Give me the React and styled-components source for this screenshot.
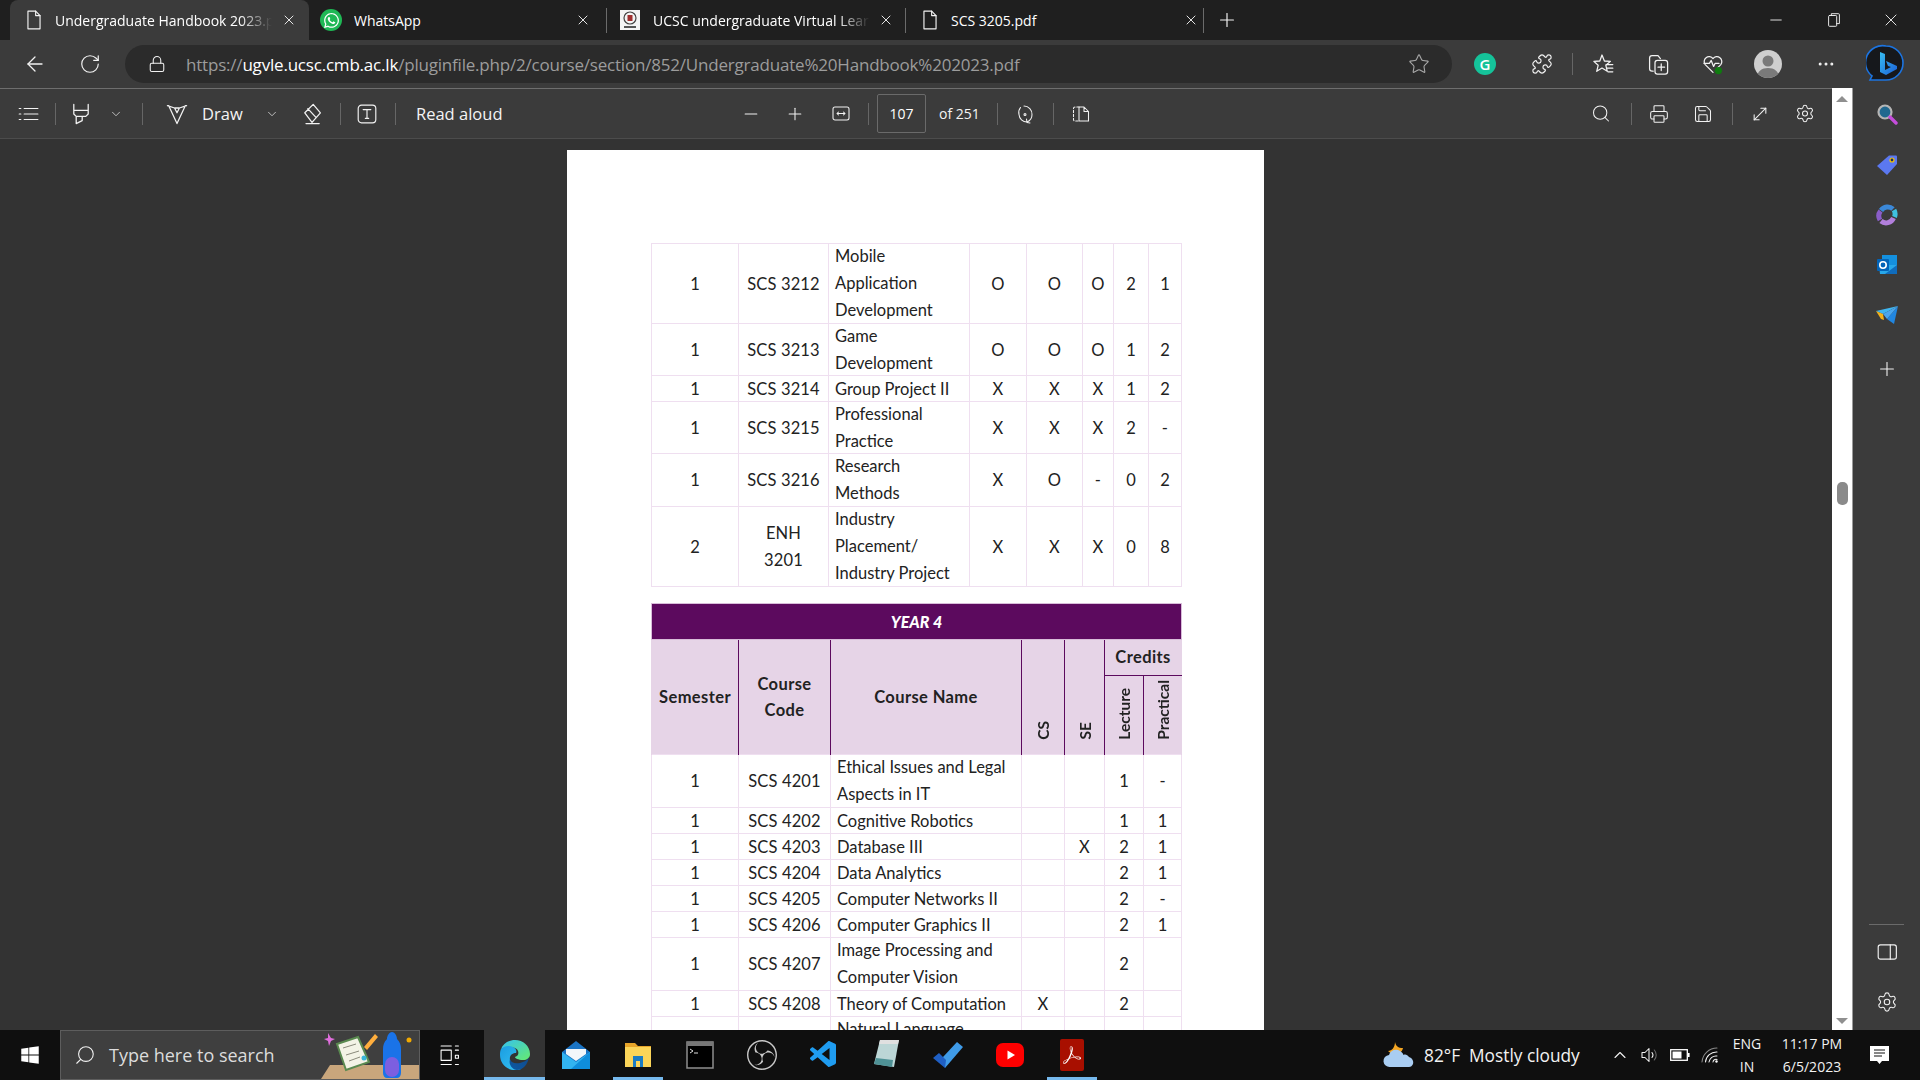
import styled, { createGlobalStyle } from "styled-components";
import {
  ArrowLeft,
  ChevronDown,
  ChevronUp,
  Minus,
  Plus,
  RotateCw,
  Search,
  Star,
  X,
  Lock,
  MoreHorizontal,
  Settings,
  Printer,
  Save,
  MoveDiagonal,
  Puzzle,
} from "lucide-react";
import { FaWhatsapp, FaWindows } from "react-icons/fa";
import { SiObsstudio, SiAdobeacrobatreader } from "react-icons/si";
import { VscVscode } from "react-icons/vsc";

const GlobalStyle = createGlobalStyle`
  html, body {
    margin: 0;
    padding: 0;
    background: #333;
    overflow: hidden;
  }
`;

const Screen = styled.div`
  width: 1920px;
  height: 1080px;
  display: flex;
  flex-direction: column;
  overflow: hidden;
  font-family: "Open Sans", "Liberation Sans", sans-serif;
  color: #fff;
`;

// shared slot, centres a glyph in a fixed width
const Slot = styled.div`
  flex: none;
  width: ${(p) => p.$w || 20}px;
  margin-left: ${(p) => p.$ml || 0}px;
  display: flex;
  align-items: center;
  justify-content: center;
  color: ${(p) => p.$color || "#f2f2f2"};
`;

/* tab strip */
const TabStrip = styled.div`
  height: 40px;
  flex: none;
  background: #1f1f1f;
  display: flex;
  align-items: stretch;
`;
const Tab = styled.div`
  flex: none;
  width: ${(p) => p.$w}px;
  margin-left: ${(p) => p.$ml || 0}px;
  position: relative;
  display: flex;
  align-items: center;
  background: ${(p) => (p.$active ? "#3b3b3b" : "transparent")};
  border-radius: ${(p) => (p.$active ? "8px 8px 0 0" : "0")};
  &::after {
    content: "";
    display: ${(p) => (p.$divider ? "block" : "none")};
    position: absolute;
    right: 0;
    top: 8px;
    width: 1px;
    height: 25px;
    background: #6b6b6b;
  }
`;
const TabTitle = styled.div`
  flex: none;
  width: ${(p) => p.$w}px;
  margin-left: ${(p) => p.$ml}px;
  font-size: 14px;
  white-space: nowrap;
  overflow: hidden;
  color: #fff;
  ${(p) =>
    p.$fade
      ? "-webkit-mask-image: linear-gradient(to right, #000 85%, transparent 100%);"
      : ""}
`;
const Favicon = styled.div`
  width: 20px;
  height: 20px;
  margin-left: ${(p) => p.$ml}px;
  flex: none;
  background: #f4f4f4;
  display: flex;
  align-items: center;
  justify-content: center;
`;
const WaBadge = styled.div`
  width: 22px;
  height: 22px;
  border-radius: 50%;
  background: #1fb855;
  color: #fff;
  display: flex;
  align-items: center;
  justify-content: center;
`;
const WindowButtons = styled.div`
  margin-left: auto;
  display: flex;
  align-items: center;
`;

/* address row */
const AddressRow = styled.div`
  height: 48px;
  flex: none;
  background: #3b3b3b;
  display: flex;
  align-items: center;
`;
const Pill = styled.div`
  flex: none;
  width: 1327px;
  height: 38px;
  margin-left: 21px;
  border-radius: 19px;
  background: #2b2b2b;
  display: flex;
  align-items: center;
`;
const Url = styled.div`
  flex: none;
  width: 1215px;
  margin-left: 19px;
  font-size: 17px;
  letter-spacing: -0.2px;
  white-space: nowrap;
  color: #9c9c9c;
  b {
    font-weight: 400;
    color: #fff;
  }
`;
const Grammarly = styled.div`
  width: 22px;
  height: 22px;
  border-radius: 50%;
  background: #15c39a;
  color: #fff;
  font-size: 15px;
  font-weight: 600;
  display: flex;
  align-items: center;
  justify-content: center;
`;
const Avatar = styled.div`
  width: 28px;
  height: 28px;
  border-radius: 50%;
  background: #cfcfcf;
  display: flex;
  align-items: center;
  justify-content: center;
  overflow: hidden;
`;

/* main area */
const Main = styled.div`
  flex: 1;
  min-height: 0;
  display: flex;
`;
const PdfPane = styled.div`
  flex: none;
  width: 1832px;
  display: flex;
  flex-direction: column;
  min-height: 0;
`;
const PdfToolbar = styled.div`
  height: 51px;
  flex: none;
  box-sizing: border-box;
  background: #3b3b3b;
  border-top: 1px solid #6e6e6e;
  border-bottom: 1px solid #4c4c4c;
  display: flex;
  align-items: center;
  padding-left: 14px;
`;
const ToolSep = styled.div`
  flex: none;
  width: 1px;
  height: 22px;
  margin-left: ${(p) => p.$ml}px;
  background: #666;
`;
const ToolText = styled.div`
  flex: none;
  margin-left: ${(p) => p.$ml}px;
  width: ${(p) => p.$w}px;
  font-size: ${(p) => p.$size || 16}px;
  color: #f4f4f4;
  white-space: nowrap;
`;
const PageBox = styled.div`
  flex: none;
  width: 49px;
  height: 39px;
  margin-left: ${(p) => p.$ml}px;
  box-sizing: border-box;
  border: 1px solid #6a6a6a;
  border-radius: 2px;
  display: flex;
  align-items: center;
  justify-content: center;
  font-size: 14px;
`;
const Viewer = styled.div`
  flex: 1;
  min-height: 0;
  background: #333333;
  overflow: hidden;
  display: flex;
  justify-content: center;
  padding-top: 11px;
  padding-right: 1px;
`;
const Page = styled.div`
  flex: none;
  width: 697px;
  height: 1100px;
  box-sizing: border-box;
  background: #fff;
  padding: 93px 83px 0 84px;
  font-family: Lato, "Liberation Sans", sans-serif;
  font-size: 16.5px;
  color: #222;
`;
const Table = styled.table`
  width: 530px;
  table-layout: fixed;
  border-collapse: collapse;
  margin-bottom: 16px;
`;
const Col = styled.col`
  width: ${(p) => p.$w}px;
`;
const Row = styled.tr`
  height: ${(p) => p.$h}px;
`;
const Cell = styled.td`
  border: 1.5px solid #efdff0;
  padding: 0;
  text-align: center;
  vertical-align: middle;
  line-height: 24px;
  overflow: hidden;
  letter-spacing: 0.15px;
`;
const NameCell = styled(Cell)`
  text-align: left;
  padding-left: 6px;
  letter-spacing: 0;
`;
const NameLine = styled.span`
  display: block;
  white-space: nowrap;
  line-height: ${(p) => (p.$multi ? "26.7px" : "24px")};
  ${(p) =>
    p.$multi
      ? `&:first-child { margin-top: -2px; } &:last-child { margin-bottom: -2px; }`
      : ""}
`;
const Banner = styled.th`
  background: #5c0a5e;
  color: #fff;
  font-style: italic;
  font-weight: 900;
  font-size: 16px;
  padding: 0;
  border: 1px solid #d8bcd9;
`;
const Head = styled.th`
  background: #e6d4e7;
  font-weight: 700;
  padding: 0;
  line-height: 26.5px;
  letter-spacing: 0.4px;
  color: #222;
  border-left: 1.5px solid #5c0a5e;
  border-right: 1.5px solid #5c0a5e;
  &:first-child {
    border-left: 1px solid #e6d4e7;
  }
  ${(p) => (p.$last ? "border-right: 1px solid #e6d4e7;" : "")}
  ${(p) => (p.$under ? "border-bottom: 1.5px solid #5c0a5e;" : "")}
  ${(p) => (p.$bottom ? "vertical-align: bottom; padding-bottom: 7px;" : "")}
`;
const Turned = styled.span`
  display: inline-block;
  writing-mode: vertical-rl;
  transform: rotate(180deg);
  line-height: 20px;
  font-size: 15.5px;
  letter-spacing: 0;
  white-space: nowrap;
`;

/* scrollbar + sidebar */
const Track = styled.div`
  flex: none;
  width: 20px;
  box-sizing: content-box;
  background: #fff;
  border-right: 1px solid #9a9a9a;
  display: flex;
  flex-direction: column;
  align-items: center;
`;
const ArrowUp = styled.div`
  width: 0;
  height: 0;
  margin-top: ${(p) => p.$mt}px;
  border-left: 6px solid transparent;
  border-right: 6px solid transparent;
  border-bottom: 6px solid #8f8f8f;
`;
const ArrowDown = styled.div`
  width: 0;
  height: 0;
  margin-top: auto;
  margin-bottom: 6px;
  border-left: 6px solid transparent;
  border-right: 6px solid transparent;
  border-top: 6px solid #8f8f8f;
`;
const Thumb = styled.div`
  width: 11px;
  height: 23px;
  margin-top: 380px;
  border-radius: 5px;
  background: #8a8a8a;
`;
const Sidebar = styled.div`
  flex: 1;
  background: #3b3b3b;
  display: flex;
  flex-direction: column;
  align-items: center;
  padding-top: 2px;
  padding-bottom: 3px;
`;
const SideSlot = styled.div`
  flex: none;
  height: 50px;
  width: 100%;
  margin-top: ${(p) => p.$mt || 0}px;
  display: flex;
  align-items: center;
  justify-content: center;
  color: #f0f0f0;
`;
const SideRule = styled.div`
  width: 35px;
  height: 1px;
  margin-top: auto;
  margin-bottom: 2px;
  background: #6a6a6a;
`;

/* taskbar */
const Taskbar = styled.div`
  height: 50px;
  flex: none;
  background: #0f0f0f;
  display: flex;
  align-items: stretch;
  position: relative;
`;
const StartSlot = styled.div`
  flex: none;
  width: 60px;
  display: flex;
  align-items: center;
  justify-content: center;
  color: #fff;
`;
const SearchBox = styled.div`
  flex: none;
  width: 360px;
  box-sizing: border-box;
  background: #3f3f3f;
  border: 1px solid #5d5d5d;
  display: flex;
  align-items: center;
  overflow: hidden;
`;
const SearchText = styled.div`
  flex: none;
  margin-left: 12px;
  width: 200px;
  font-size: 18px;
  color: #dcdcdc;
`;
const FlipSearch = styled(Search)`
  transform: scaleX(-1);
`;
const TaskApp = styled.div`
  flex: none;
  box-sizing: border-box;
  width: ${(p) => p.$w || 62}px;
  margin-left: ${(p) => p.$ml || 0}px;
  display: flex;
  align-items: center;
  justify-content: center;
  background: ${(p) => (p.$active ? "#333" : "transparent")};
  position: relative;
  &::after {
    content: "";
    display: ${(p) => (p.$open ? "block" : "none")};
    position: absolute;
    left: ${(p) => (p.$active ? 0 : 6)}px;
    right: ${(p) => (p.$active ? 0 : 6)}px;
    bottom: 0;
    height: 3px;
    background: #76b9ed;
  }
`;
const PdfTile = styled.div`
  width: 24px;
  height: 32px;
  border-radius: 2px;
  background: #a80f00;
  color: #fff;
  display: flex;
  align-items: center;
  justify-content: center;
`;
const Tray = styled.div`
  margin-left: auto;
  width: 537px;
  flex: none;
  display: flex;
  align-items: center;
`;
const TrayText = styled.div`
  flex: none;
  width: ${(p) => p.$w}px;
  margin-left: ${(p) => p.$ml}px;
  font-size: 17.3px;
  color: #f2f2f2;
  white-space: pre;
`;
const Clock = styled.div`
  flex: none;
  width: ${(p) => p.$w}px;
  margin-left: ${(p) => p.$ml}px;
  font-size: 14px;
  line-height: 23px;
  text-align: center;
  color: #f2f2f2;
  white-space: nowrap;
`;

/* drawn icons */
const Svg = ({ s = 20, children, w = 1.05, view = "0 0 20 20" }) => (
  <svg
    width={s}
    height={s}
    viewBox={view}
    fill="none"
    stroke="currentColor"
    strokeWidth={w}
    strokeLinejoin="round"
    strokeLinecap="round"
  >
    {children}
  </svg>
);

const DocIcon = () => (
  <Svg s={22}>
    <path d="M4.5 2h7l4 4v12h-11z" />
    <path d="M11.5 2v4h4" />
  </Svg>
);
const ListIcon = () => (
  <Svg s={22}>
    <path d="M2 5h1.5M2 10h1.5M2 15h1.5M6.500 5H19M6.500 10H19M6.500 15H19" />
  </Svg>
);
const HighlightIcon = () => (
  <Svg s={24}>
    <path d="M4 2v5h12V2M4 7v3l2 2h8l2-2V7M6 12v6l5-2.500V12" />
  </Svg>
);
const DrawIcon = () => (
  <Svg s={24}>
    <path d="M2 3l6 2h4l6-2M3 3l7 15 7-15M8 5l2 4 2-4" />
  </Svg>
);
const EraserIcon = () => (
  <Svg s={24}>
    <path d="M11 2l6 7-7 8-6-8zM6.500 5.500l7 7.500M5 18h11" />
  </Svg>
);
const TextBoxIcon = () => (
  <Svg s={22}>
    <rect x="2" y="2" width="16" height="16" rx="3" />
    <path d="M6.500 6h7M10 6v8M8.500 14h3" />
  </Svg>
);
const FitIcon = () => (
  <Svg s={21}>
    <rect x="2" y="3.5" width="16" height="13" rx="2" />
    <path d="M6 10h8M6 10l1.500-1.500M6 10l1.500 1.500M14 10l-1.500-1.500M14 10l-1.500 1.500" />
  </Svg>
);
const RotateIcon = () => (
  <Svg s={22}>
    <path d="M5.500 3.500A8 8 0 0 0 4 10.500a8 8 0 0 0 8 7.500M9 2a8 8 0 0 1 8 8.500 8 8 0 0 1-5 7.500M12 18.500l-0.500-3.500M12 18.500l3 0.500" />
    <circle cx="10" cy="10.5" r="1" />
  </Svg>
);
const TwoPageIcon = () => (
  <Svg s={22}>
    <path d="M8 3H4a1.500 1.500 0 0 0-1.500 1.500v11A1.500 1.500 0 0 0 4 17h4" strokeDasharray="2.2 1.8" />
    <path d="M8 3h5l4.500 4.500V17H8zM13 3v4.500h4.500" />
  </Svg>
);
const RestoreIcon = () => (
  <Svg s={18}>
    <rect x="4" y="5" width="9" height="12" rx="1" />
    <path d="M7 5V3h8a1 1 0 0 1 1 1v10h-3" />
  </Svg>
);
const FavoritesIcon = () => (
  <Svg s={24}>
    <path d="M10 2.500l2 5 5 .3-3.800 3.300 1.200 5-4.400-2.700-4.400 2.700 1.200-5L3.200 7.800l5-.3z" />
    <path d="M13.500 10.500H19M14 13.500h5M15 16.500h4" />
  </Svg>
);
const CollectionsIcon = () => (
  <Svg s={24}>
    <path d="M6 16H5a2 2 0 0 1-2-2V5a2 2 0 0 1 2-2h5l2 2.500" />
    <rect x="7.5" y="7" width="10.5" height="11.5" rx="2" />
    <path d="M12.700 10v5.500M10 12.700h5.500" />
  </Svg>
);
const HealthIcon = () => (
  <Svg s={24}>
    <path d="M10 17L3.500 10.500A4 4 0 0 1 10 5.500a4 4 0 0 1 6.500 5L14 13" />
    <path d="M2.500 9.500H7L8.500 7l2 5 1.200-2.500H15" />
    <circle cx="14.5" cy="15.5" r="3" fill="#0f7b0f" stroke="none" />
  </Svg>
);
const PanelIcon = () => (
  <Svg s={22}>
    <rect x="2" y="3.5" width="16.5" height="13" rx="2" />
    <path d="M13 3.500v13" />
  </Svg>
);
const TaskViewIcon = () => (
  <Svg s={24}>
    <path d="M5 3h10M5 21h10M5 7h10v10H5zM19 7h3M19 12h3v3h-3zM19 21h3M19 3h3" transform="scale(0.85) translate(-1 0)" />
  </Svg>
);
const SpeakerIcon = () => (
  <Svg s={20}>
    <path d="M3 7.500h3L10 3.500v13l-4-4H3z" />
    <path d="M13 7.500a4 4 0 0 1 0 5" />
    <path d="M15.300 5a7.500 7.500 0 0 1 0 10" stroke="#6a6a6a" />
  </Svg>
);
const BatteryIcon = () => (
  <svg width="20" height="12" viewBox="0 0 20 12">
    <rect x="0.7" y="0.7" width="16.6" height="10.6" fill="none" stroke="#fff" strokeWidth="1.3" />
    <rect x="2.5" y="2.5" width="9" height="7" fill="#fff" />
    <rect x="18" y="4" width="1.6" height="4" fill="#fff" />
  </svg>
);
const WifiIcon = () => (
  <Svg s={20}>
    <path d="M2 17A15 15 0 0 1 17 3" stroke="#8a8a8a" />
    <path d="M5.500 17A11 11 0 0 1 17 7" />
    <path d="M9 17a7 7 0 0 1 8-6" />
    <path d="M13 17a3 3 0 0 1 4-2.500" />
    <circle cx="16.5" cy="16.5" r="1.2" fill="#fff" stroke="none" />
  </Svg>
);
const NotifyIcon = () => (
  <svg width="21" height="21" viewBox="0 0 21 21">
    <path d="M1 1h19v15h-7l-2.500 3-2.500-3H1z" fill="#fff" />
    <path d="M5 5h11M5 8h11M5 11h8" stroke="#111" strokeWidth="1" />
  </svg>
);

const BingLogo = () => (
  <svg width="40" height="40" viewBox="0 0 40 40">
    <defs>
      <linearGradient id="bingG" x1="0" y1="0" x2="1" y2="1">
        <stop offset="0" stopColor="#37bdf2" />
        <stop offset="1" stopColor="#1b5fd6" />
      </linearGradient>
    </defs>
    <path d="M20 2a17 17 0 0 1 0 34H4l2-4A17 17 0 0 1 20 2z" fill="#16181c" stroke="#1c74e0" strokeWidth="1.6" />
    <path d="M14 8l5 2v16l6-3-3-1-2-5 11 5v3l-11 6-6-3z" fill="url(#bingG)" />
  </svg>
);
const ColorSearch = () => (
  <svg width="22" height="24" viewBox="0 0 22 24">
    <circle cx="9" cy="9" r="6.5" fill="#21688f" stroke="#b5b5b5" strokeWidth="2.2" />
    <path d="M14 14l6 6" stroke="#c44ddb" strokeWidth="3.4" strokeLinecap="round" />
  </svg>
);
const TagIcon = () => (
  <svg width="22" height="22" viewBox="0 0 22 22">
    <path d="M13 1.500h7a1 1 0 0 1 1 1V10L11 21 1 12z" fill="#5b78f0" />
    <circle cx="16" cy="6" r="2" fill="#1b2960" stroke="#f5c400" strokeWidth="1.2" />
  </svg>
);
const CopilotIcon = () => (
  <svg width="22" height="24" viewBox="0 0 22 24" fill="none" strokeWidth="5">
    <path d="M5 7.500A8 8 0 0 1 17 6" stroke="#3b88d8" />
    <path d="M4 17A8 8 0 0 1 4.500 8" stroke="#8a5dc8" />
    <path d="M17.500 15A8 8 0 0 1 5 18" stroke="#b27fdc" />
    <path d="M18 7A8 8 0 0 1 18.500 14" stroke="#3fc0e0" />
  </svg>
);
const OutlookIcon = () => (
  <svg width="22" height="22" viewBox="0 0 22 22">
    <rect x="6" y="1" width="15" height="10" fill="#1490df" />
    <path d="M3 11h18v9H4z" fill="#28a8ea" />
    <path d="M21 11v9H9z" fill="#0f6cbd" />
    <rect x="1" y="5" width="12" height="12" rx="1" fill="#0364b8" />
    <circle cx="7" cy="11" r="3.2" fill="none" stroke="#fff" strokeWidth="1.6" />
  </svg>
);
const SendIcon = () => (
  <svg width="24" height="20" viewBox="0 0 24 20">
    <path d="M1 6L23 1 8 9z" fill="#3fb6f0" />
    <path d="M23 1L19 19 12 14z" fill="#2186e0" />
    <path d="M8 9l15-8-11 13z" fill="#4aa6ee" />
    <path d="M1 6l7 3 1 6-3-1z" fill="#f2b21a" />
  </svg>
);
const EdgeLogo = () => (
  <svg width="32" height="32" viewBox="0 0 32 32">
    <defs>
      <linearGradient id="edgeB" x1="0" y1="1" x2="1" y2="0">
        <stop offset="0" stopColor="#0c59a4" />
        <stop offset="1" stopColor="#114a8b" />
      </linearGradient>
      <linearGradient id="edgeC" x1="0" y1="0" x2="1" y2="1">
        <stop offset="0" stopColor="#1b9de2" />
        <stop offset="1" stopColor="#35c1f1" />
      </linearGradient>
      <linearGradient id="edgeG" x1="0" y1="0" x2="1" y2="1">
        <stop offset="0" stopColor="#35c1f1" />
        <stop offset="1" stopColor="#66eb6e" />
      </linearGradient>
    </defs>
    <path d="M16 1c8 0 15 6 15 14 0 4-3 6-7 6-5 0-8-2-8-3 3-1 4-3 3-6-1-4-8-5-11-1-3-2-5-2-6-1C4 5 9 1 16 1z" fill="url(#edgeG)" />
    <path d="M2 10c3-3 8-4 12-2 3 1.500 4 4 3 6-3 0-7 2-6 7 1 5 6 9 11 9-2 1-4 1-6 1C7 31 1 24 1 16c0-2 0-4 1-6z" fill="url(#edgeC)" />
    <path d="M11 20c1 4 5 5 10 4 4-1 8-3 9-6-1 7-6 13-12 13-4 0-9-5-7-11z" fill="url(#edgeB)" />
  </svg>
);
const MailLogo = () => (
  <svg width="30" height="30" viewBox="0 0 30 30">
    <path d="M15 1L1 12v17h28V12z" fill="#1b74c4" />
    <path d="M1 12l14 10 14-10v17H1z" fill="#32b4f0" />
    <path d="M5 9h20v5l-10 7-10-7z" fill="#f2f6fa" />
    <path d="M29 12v17H10z" fill="#0f8ddb" />
  </svg>
);
const FilesLogo = () => (
  <svg width="28" height="28" viewBox="0 0 28 28">
    <path d="M1 2h10l3 3h13v21H1z" fill="#e7a52a" />
    <rect x="1" y="6" width="26" height="20" fill="#fbd559" />
    <path d="M9 26V15h10v11h-3v-6h-4v6z" fill="#1a7cc4" />
  </svg>
);
const TerminalLogo = () => (
  <svg width="28" height="28" viewBox="0 0 28 28">
    <rect x="1" y="1" width="26" height="26" fill="#000" stroke="#8f8f8f" strokeWidth="1.5" />
    <rect x="1" y="1" width="26" height="4" fill="#777" />
    <path d="M4 8l3 2-3 2M8 12h4" stroke="#ddd" strokeWidth="1" fill="none" />
  </svg>
);
const NotesLogo = () => (
  <svg width="30" height="32" viewBox="0 0 30 32">
    <path d="M9 1h19L23 28 3 25z" fill="#bcd6d6" />
    <path d="M5 19l17 2-1 7-18-3z" fill="#4f9296" />
    <path d="M9 1h19l-1 4H8z" fill="#e0e0e0" />
  </svg>
);
const TodoLogo = () => (
  <svg width="32" height="30" viewBox="0 0 32 30">
    <path d="M11 17L25 2l6 5-18 21z" fill="#3f9be8" />
    <path d="M1 18l6-5 7 7-1 8z" fill="#1f5fc4" />
  </svg>
);
const YouTubeLogo = () => (
  <svg width="30" height="30" viewBox="0 0 30 30">
    <rect x="1" y="3" width="28" height="24" rx="7" fill="#f00" />
    <path d="M12.500 10.500l7.500 4.500-7.500 4.500z" fill="#fff" />
  </svg>
);
const SearchArt = () => (
  <svg width="98" height="48" viewBox="0 0 98 48">
    <path d="M0 48l9-14h62l27 0v14z" fill="#c9a67c" />
    <path d="M16 13l21-7 11 25-23 8z" fill="#f3f3e6" stroke="#5a8a50" strokeWidth="2" />
    <path d="M22 17l13-4M25 24l13-4M28 30l11-4" stroke="#8b8b7c" strokeWidth="1" />
    <path d="M43 16l11-13 3 3-11 13z" fill="#ffae3d" />
    <path d="M7 2l3 5 4 1-4 2-2 5-1-5-4-2 4-1z" fill="#df6edc" />
    <circle cx="43" cy="27" r="2.500" fill="#38b6d8" />
    <path d="M66 8c0-3 2-7 5-7s5 4 5 7c3 3 4 6 4 10v24c0 3-2 5-4 5H66c-2 0-4-2-4-5V18c0-4 1-7 4-10z" fill="#1a73e8" />
    <rect x="64" y="26" width="14" height="20" rx="7" fill="#7c5fe0" />
    <circle cx="88" cy="9" r="2.500" fill="#f2a900" />
  </svg>
);
const WeatherIcon = () => (
  <svg width="32" height="30" viewBox="0 0 32 30">
    <path d="M12 2c1 4 3 6 8 6-1 4-4 6-8 6-3 0-5-1-7-3 4 0 7-4 7-9z" fill="#f5a623" />
    <path d="M7 27a6 6 0 0 1-1-12c1-4 5-6 9-5 3 1 5 3 5.500 5 2-1 4 0 5.500 2 3 1 5 4 4 7-1 2-2 3-4 3z" fill="#a9cdf2" />
  </svg>
);
const AvatarFace = () => (
  <svg width="28" height="28" viewBox="0 0 28 28">
    <circle cx="14" cy="11" r="5.500" fill="#7a7a7a" />
    <path d="M3 28c0-7 5-10 11-10s11 3 11 10z" fill="#7a7a7a" />
  </svg>
);
const SealIcon = () => (
  <svg width="16" height="18" viewBox="0 0 16 18">
    <circle cx="8" cy="7" r="6" fill="none" stroke="#444" strokeWidth="1.2" />
    <rect x="5.500" y="4" width="5" height="6" fill="#a03030" />
    <rect x="2" y="15" width="12" height="2" fill="#555" />
  </svg>
);

const thinStroke = { size: 20, strokeWidth: 1.25 };

const year3 = [
  { h: 80, sem: "1", code: ["SCS 3212"], name: ["Mobile", "Application", "Development"], v: ["O", "O", "O", "2", "1"] },
  { h: 52, sem: "1", code: ["SCS 3213"], name: ["Game", "Development"], v: ["O", "O", "O", "1", "2"] },
  { h: 26, sem: "1", code: ["SCS 3214"], name: ["Group Project II"], v: ["X", "X", "X", "1", "2"] },
  { h: 52, sem: "1", code: ["SCS 3215"], name: ["Professional", "Practice"], v: ["X", "X", "X", "2", "-"] },
  { h: 53, sem: "1", code: ["SCS 3216"], name: ["Research", "Methods"], v: ["X", "O", "-", "0", "2"] },
  { h: 80, sem: "2", code: ["ENH", "3201"], name: ["Industry", "Placement/", "Industry Project"], v: ["X", "X", "X", "0", "8"] },
];

const year4 = [
  { h: 53, code: "SCS 4201", name: ["Ethical Issues and Legal", "Aspects in IT"], v: ["", "", "1", "-"] },
  { h: 26, code: "SCS 4202", name: ["Cognitive Robotics"], v: ["", "", "1", "1"] },
  { h: 26, code: "SCS 4203", name: ["Database III"], v: ["", "X", "2", "1"] },
  { h: 26, code: "SCS 4204", name: ["Data Analytics"], v: ["", "", "2", "1"] },
  { h: 26, code: "SCS 4205", name: ["Computer Networks II"], v: ["", "", "2", "-"] },
  { h: 26, code: "SCS 4206", name: ["Computer Graphics II"], v: ["", "", "2", "1"] },
  { h: 53, code: "SCS 4207", name: ["Image Processing and", "Computer Vision"], v: ["", "", "2", ""] },
  { h: 26, code: "SCS 4208", name: ["Theory of Computation"], v: ["X", "", "2", ""] },
  { h: 53, code: "SCS 4209", name: ["Natural Language", "Processing"], v: ["", "", "2", ""] },
];

const Names = ({ lines }) =>
  lines.map((l) => (
    <NameLine key={l} $multi={lines.length > 1}>
      {l}
    </NameLine>
  ));

export default function App() {
  return (
    <Screen>
      <GlobalStyle />
      <TabStrip>
        <Tab $w={299} $ml={10} $active>
          <Slot $w={22} $ml={13}>
            <DocIcon />
          </Slot>
          <TabTitle $w={217} $ml={10} $fade>
            Undergraduate Handbook 2023.pdf
          </TabTitle>
          <Slot $w={16} $ml={9}>
            <X size={18} strokeWidth={1.4} />
          </Slot>
        </Tab>
        <Tab $w={298} $divider>
          <Slot $w={22} $ml={11}>
            <WaBadge>
              <FaWhatsapp size={17} />
            </WaBadge>
          </Slot>
          <TabTitle $w={200} $ml={12}>
            WhatsApp
          </TabTitle>
          <Slot $w={16} $ml={21}>
            <X size={18} strokeWidth={1.4} />
          </Slot>
        </Tab>
        <Tab $w={299} $divider>
          <Favicon $ml={13}>
            <SealIcon />
          </Favicon>
          <TabTitle $w={217} $ml={13} $fade>
            UCSC undergraduate Virtual Learning Environment
          </TabTitle>
          <Slot $w={16} $ml={8}>
            <X size={18} strokeWidth={1.4} />
          </Slot>
        </Tab>
        <Tab $w={298} $divider>
          <Slot $w={22} $ml={13}>
            <DocIcon />
          </Slot>
          <TabTitle $w={200} $ml={10}>
            SCS 3205.pdf
          </TabTitle>
          <Slot $w={16} $ml={32}>
            <X size={18} strokeWidth={1.4} />
          </Slot>
        </Tab>
        <Slot $w={22} $ml={12}>
          <Plus size={24} strokeWidth={1.3} />
        </Slot>
        <WindowButtons>
          <Slot $w={20}>
            <Minus size={18} strokeWidth={1.2} />
          </Slot>
          <Slot $w={20} $ml={38}>
            <RestoreIcon />
          </Slot>
          <Slot $w={20} $ml={37}>
            <X size={20} strokeWidth={1.1} />
          </Slot>
          <Slot $w={19} />
        </WindowButtons>
      </TabStrip>

      <AddressRow>
        <Slot $w={26} $ml={22}>
          <ArrowLeft size={24} strokeWidth={1.3} />
        </Slot>
        <Slot $w={28} $ml={28}>
          <RotateCw size={22} strokeWidth={1.3} />
        </Slot>
        <Pill>
          <Slot $w={20} $ml={22}>
            <Lock size={18} strokeWidth={1.4} />
          </Slot>
          <Url>
            https://<b>ugvle.ucsc.cmb.ac.lk</b>/pluginfile.php/2/course/section/852/Undergraduate%20Handbook%202023.pdf
          </Url>
          <Slot $w={22} $ml={7} $color="#a8a8a8">
            <Star size={22} strokeWidth={1.2} />
          </Slot>
        </Pill>
        <Slot $w={22} $ml={22}>
          <Grammarly>G</Grammarly>
        </Slot>
        <Slot $w={24} $ml={34}>
          <Puzzle size={22} strokeWidth={1.3} />
        </Slot>
        <ToolSep $ml={18} />
        <Slot $w={24} $ml={17}>
          <FavoritesIcon />
        </Slot>
        <Slot $w={24} $ml={32}>
          <CollectionsIcon />
        </Slot>
        <Slot $w={24} $ml={31}>
          <HealthIcon />
        </Slot>
        <Slot $w={28} $ml={29}>
          <Avatar>
            <AvatarFace />
          </Avatar>
        </Slot>
        <Slot $w={22} $ml={33}>
          <MoreHorizontal size={20} strokeWidth={1.6} />
        </Slot>
        <Slot $w={40} $ml={29}>
          <BingLogo />
        </Slot>
      </AddressRow>

      <Main>
        <PdfPane>
          <PdfToolbar>
            <Slot $w={28}>
              <ListIcon />
            </Slot>
            <ToolSep $ml={13} />
            <Slot $w={26} $ml={12}>
              <HighlightIcon />
            </Slot>
            <Slot $w={16} $ml={14}>
              <ChevronDown size={14} strokeWidth={1.2} />
            </Slot>
            <ToolSep $ml={18} />
            <Slot $w={24} $ml={22}>
              <DrawIcon />
            </Slot>
            <ToolText $ml={13} $w={41} $size={16.5}>
              Draw
            </ToolText>
            <Slot $w={16} $ml={21}>
              <ChevronDown size={14} strokeWidth={1.2} />
            </Slot>
            <Slot $w={24} $ml={20}>
              <EraserIcon />
            </Slot>
            <ToolSep $ml={16} />
            <Slot $w={24} $ml={14}>
              <TextBoxIcon />
            </Slot>
            <ToolSep $ml={16} />
            <ToolText $ml={20} $w={86} $size={16.5}>
              Read aloud
            </ToolText>
            <Slot $ml={239}>
              <Minus {...thinStroke} />
            </Slot>
            <Slot $ml={24}>
              <Plus {...thinStroke} />
            </Slot>
            <Slot $ml={26}>
              <FitIcon />
            </Slot>
            <ToolSep $ml={17} />
            <PageBox $ml={8}>107</PageBox>
            <ToolText $ml={13} $w={42} $size={14}>
              of 251
            </ToolText>
            <ToolSep $ml={16} />
            <Slot $ml={17}>
              <RotateIcon />
            </Slot>
            <ToolSep $ml={18} />
            <Slot $ml={17}>
              <TwoPageIcon />
            </Slot>
            <Slot $ml={500}>
              <Search size={21} strokeWidth={1.25} />
            </Slot>
            <ToolSep $ml={20} />
            <Slot $ml={17}>
              <Printer size={22} strokeWidth={1.25} />
            </Slot>
            <Slot $ml={24}>
              <Save size={22} strokeWidth={1.25} />
            </Slot>
            <ToolSep $ml={19} />
            <Slot $ml={17}>
              <MoveDiagonal size={26} strokeWidth={1.25} />
            </Slot>
            <Slot $ml={25}>
              <Settings size={23} strokeWidth={1.25} />
            </Slot>
          </PdfToolbar>

          <Viewer>
            <Page>
              <Table>
                <colgroup>
                  {[87, 90, 141, 57, 56, 31, 35, 33].map((w, i) => (
                    <Col key={i} $w={w} />
                  ))}
                </colgroup>
                <tbody>
                  {year3.map((r) => (
                    <Row key={r.code.join()} $h={r.h}>
                      <Cell>{r.sem}</Cell>
                      <Cell>
                        {r.code.map((c) => (
                          <NameLine key={c} $multi={r.code.length > 1}>
                            {c}
                          </NameLine>
                        ))}
                      </Cell>
                      <NameCell>
                        <Names lines={r.name} />
                      </NameCell>
                      {r.v.map((v, i) => (
                        <Cell key={i}>{v}</Cell>
                      ))}
                    </Row>
                  ))}
                </tbody>
              </Table>

              <Table>
                <colgroup>
                  {[87, 92, 191, 43, 40, 39, 38].map((w, i) => (
                    <Col key={i} $w={w} />
                  ))}
                </colgroup>
                <thead>
                  <Row $h={36}>
                    <Banner colSpan={7}>YEAR 4</Banner>
                  </Row>
                  <Row $h={36}>
                    <Head rowSpan={2}>Semester</Head>
                    <Head rowSpan={2}>
                      Course
                      <br />
                      Code
                    </Head>
                    <Head rowSpan={2}>Course Name</Head>
                    <Head rowSpan={2} $bottom>
                      <Turned>CS</Turned>
                    </Head>
                    <Head rowSpan={2} $bottom>
                      <Turned>SE</Turned>
                    </Head>
                    <Head colSpan={2} $last $under>
                      Credits
                    </Head>
                  </Row>
                  <Row $h={79}>
                    <Head $bottom>
                      <Turned>Lecture</Turned>
                    </Head>
                    <Head $bottom $last>
                      <Turned>Practical</Turned>
                    </Head>
                  </Row>
                </thead>
                <tbody>
                  {year4.map((r) => (
                    <Row key={r.code} $h={r.h}>
                      <Cell>1</Cell>
                      <Cell>{r.code}</Cell>
                      <NameCell>
                        <Names lines={r.name} />
                      </NameCell>
                      {r.v.map((v, i) => (
                        <Cell key={i}>{v}</Cell>
                      ))}
                    </Row>
                  ))}
                </tbody>
              </Table>
            </Page>
          </Viewer>
        </PdfPane>

        <Track>
          <ArrowUp $mt={8} />
          <Thumb />
          <ArrowDown />
        </Track>

        <Sidebar>
          <SideSlot>
            <ColorSearch />
          </SideSlot>
          <SideSlot>
            <TagIcon />
          </SideSlot>
          <SideSlot>
            <CopilotIcon />
          </SideSlot>
          <SideSlot>
            <OutlookIcon />
          </SideSlot>
          <SideSlot>
            <SendIcon />
          </SideSlot>
          <SideSlot $mt={4}>
            <Plus size={22} strokeWidth={1.2} />
          </SideSlot>
          <SideRule />
          <SideSlot>
            <PanelIcon />
          </SideSlot>
          <SideSlot>
            <Settings size={22} strokeWidth={1.2} />
          </SideSlot>
        </Sidebar>
      </Main>

      <Taskbar>
        <StartSlot>
          <FaWindows size={20} />
        </StartSlot>
        <SearchBox>
          <Slot $w={24} $ml={12}>
            <FlipSearch size={22} strokeWidth={1.2} />
          </Slot>
          <SearchText>Type here to search</SearchText>
          <Slot $w={98} $ml={12}>
            <SearchArt />
          </Slot>
        </SearchBox>
        <TaskApp $w={58}>
          <TaskViewIcon />
        </TaskApp>
        <TaskApp $w={61} $ml={6} $active $open>
          <EdgeLogo />
        </TaskApp>
        <TaskApp>
          <MailLogo />
        </TaskApp>
        <TaskApp $open>
          <FilesLogo />
        </TaskApp>
        <TaskApp>
          <TerminalLogo />
        </TaskApp>
        <TaskApp>
          <SiObsstudio size={30} color="#c9c9c9" />
        </TaskApp>
        <TaskApp>
          <VscVscode size={32} color="#1f9cf0" />
        </TaskApp>
        <TaskApp>
          <NotesLogo />
        </TaskApp>
        <TaskApp>
          <TodoLogo />
        </TaskApp>
        <TaskApp>
          <YouTubeLogo />
        </TaskApp>
        <TaskApp $open>
          <PdfTile>
            <SiAdobeacrobatreader size={18} />
          </PdfTile>
        </TaskApp>
        <Tray>
          <Slot $w={32}>
            <WeatherIcon />
          </Slot>
          <TrayText $w={156} $ml={9}>
            82°F  Mostly cloudy
          </TrayText>
          <Slot $ml={30}>
            <ChevronUp size={22} strokeWidth={1.3} />
          </Slot>
          <Slot $ml={9}>
            <SpeakerIcon />
          </Slot>
          <Slot $ml={11}>
            <BatteryIcon />
          </Slot>
          <Slot $ml={10}>
            <WifiIcon />
          </Slot>
          <Clock $w={40} $ml={7}>
            ENG
            <br />
            IN
          </Clock>
          <Clock $w={70} $ml={10}>
            11:17 PM
            <br />
            6/5/2023
          </Clock>
          <Slot $w={24} $ml={20}>
            <NotifyIcon />
          </Slot>
        </Tray>
      </Taskbar>
    </Screen>
  );
}
